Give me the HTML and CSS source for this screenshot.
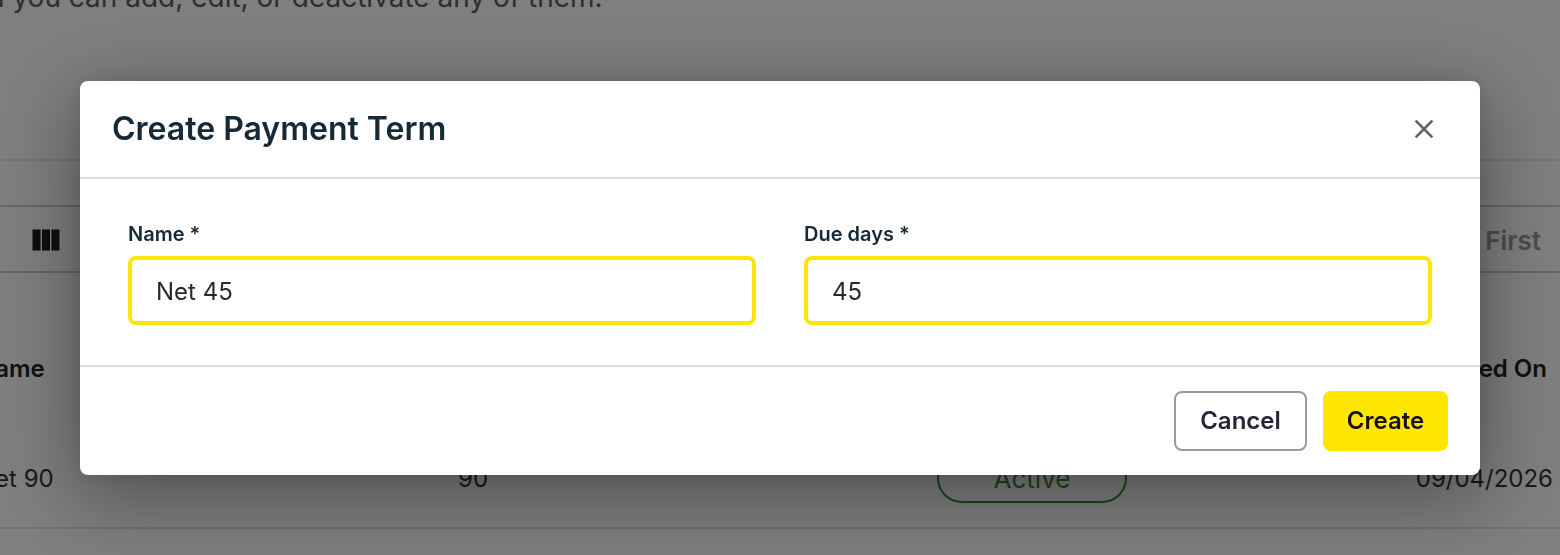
FILE: index.html
```html
<!DOCTYPE html>
<html lang="en">
<head>
  <meta charset="UTF-8" />
  <title>Payment Terms</title>
  <link rel="stylesheet" href="styles.css">
</head>
<body>
  <div class="page">
    <p class="intro">n you can add, edit, or deactivate any of them.</p>
    <div class="toolbar-gap"></div>
    <div class="toolbar">
      <svg class="columns-icon" viewBox="0 0 24 24"><path d="M14.67 5v14H9.33V5zm1 14H21V5h-5.33zm-7.33 0V5H3v14z"/></svg>
      <span class="pager-first">First</span>
    </div>
    <div class="table-row table-head">
      <span>Name</span>
      <span>Due Days</span>
      <span class="status-head">Status</span>
      <span class="date-head">Created On</span>
    </div>
    <div class="table-row table-body">
      <span>Net 90</span>
      <span>90</span>
      <span class="chip">Active</span>
      <span class="date">09/04/2026</span>
    </div>
  </div>

  <div class="backdrop">
    <div class="modal">
      <div class="modal-header">
        <h2>Create Payment Term</h2>
        <svg class="close-icon" viewBox="0 0 24 24"><path d="M19 6.41 17.59 5 12 10.59 6.41 5 5 6.41 10.59 12 5 17.59 6.41 19 12 13.41 17.59 19 19 17.59 13.41 12z"/></svg>
      </div>
      <div class="modal-body">
        <label class="field">
          <span class="field-label">Name *</span>
          <input class="field-input" type="text" value="Net 45" />
        </label>
        <label class="field">
          <span class="field-label">Due days *</span>
          <input class="field-input" type="text" value="45" />
        </label>
      </div>
      <div class="modal-footer">
        <button class="btn btn-cancel">Cancel</button>
        <button class="btn btn-create">Create</button>
      </div>
    </div>
  </div>
</body>
</html>
```

FILE: styles.css
```css
* {
  box-sizing: border-box;
}

body {
  margin: 0;
  height: 555px;
  overflow: hidden;
  background: #fff;
  font-family: Inter, "Liberation Sans", sans-serif;
  color: #1c1c1c;
}

.page {
  height: 555px;
  overflow: hidden;
}

.intro {
  margin: -20px 0 0 -12px;
  height: 34px;
  font-size: 28px;
  line-height: 34px;
  color: #5c5c5c;
  white-space: nowrap;
}

.toolbar-gap {
  height: 147px;
  border-bottom: 2px solid #e6e8ea;
}

.toolbar {
  height: 68px;
  margin-top: 44px;
  padding: 2px 19px 0 28px;
  display: flex;
  align-items: center;
  justify-content: space-between;
  border-top: 2px solid #c8ced3;
  border-bottom: 2px solid #c8ced3;
}

.columns-icon {
  width: 36px;
  height: 36px;
  fill: #1c1c1c;
}

.pager-first {
  font-size: 26px;
  font-weight: 600;
  color: #999;
}

.table-row {
  display: grid;
  grid-template-columns: 481px 479px 190px 1fr;
  margin-left: -23px;
  padding-right: 7px;
  align-items: center;
  font-size: 24px;
}

.table-head {
  height: 110px;
  margin-top: 40px;
  font-weight: 600;
  color: #222;
}

.status-head {
  text-align: center;
}

.date-head {
  text-align: right;
  padding-right: 6px;
}

.table-body {
  height: 100px;
  margin-top: 6px;
  border-bottom: 2px solid #e2e4e6;
  color: #333;
}

.chip {
  height: 50px;
  display: flex;
  align-items: center;
  justify-content: center;
  border: 2px solid #3b8a3b;
  border-radius: 25px;
  font-size: 26px;
  color: #3b8a3b;
}

.date {
  text-align: right;
}

.backdrop {
  position: fixed;
  inset: 0;
  display: flex;
  align-items: center;
  justify-content: center;
  background: rgba(0, 0, 0, 0.5);
}

.modal {
  width: 1400px;
  background: #fff;
  border-radius: 8px;
  box-shadow: 0 20px 80px 4px rgba(0, 0, 0, 0.37), 0 0 20px rgba(0, 0, 0, 0.1);
}

.modal-header {
  height: 98px;
  padding: 0 40px 0 32px;
  display: flex;
  align-items: center;
  justify-content: space-between;
  border-bottom: 2px solid #d7dde1;
}

.modal-header h2 {
  margin: 0;
  font-size: 32px;
  font-weight: 600;
  color: #152936;
}

.close-icon {
  width: 32px;
  height: 32px;
  fill: #666;
}

.modal-body {
  height: 188px;
  padding: 40px 48px 0;
  display: grid;
  grid-template-columns: 628px 628px;
  gap: 48px;
  border-bottom: 2px solid #d7dde1;
}

.field {
  display: block;
}

.field-label {
  display: block;
  height: 37px;
  font-size: 20px;
  line-height: 30px;
  font-weight: 600;
  color: #152936;
}

.field-input {
  display: block;
  width: 100%;
  height: 69px;
  padding: 2px 24px 0;
  border: 4px solid #ffe600;
  border-radius: 8px;
  outline: none;
  background: #fff;
  font-family: inherit;
  font-size: 24px;
  color: #2a2a2a;
}

.modal-footer {
  height: 108px;
  padding: 24px 32px 0;
  display: flex;
  justify-content: flex-end;
  gap: 16px;
}

.btn {
  height: 60px;
  border-radius: 8px;
  font-family: inherit;
  font-size: 24px;
  font-weight: 600;
}

.btn-cancel {
  width: 133px;
  border: 2px solid #9a99a6;
  background: #fff;
  color: #25253a;
}

.btn-create {
  width: 125px;
  border: none;
  background: #ffe600;
  color: #111;
}
```
